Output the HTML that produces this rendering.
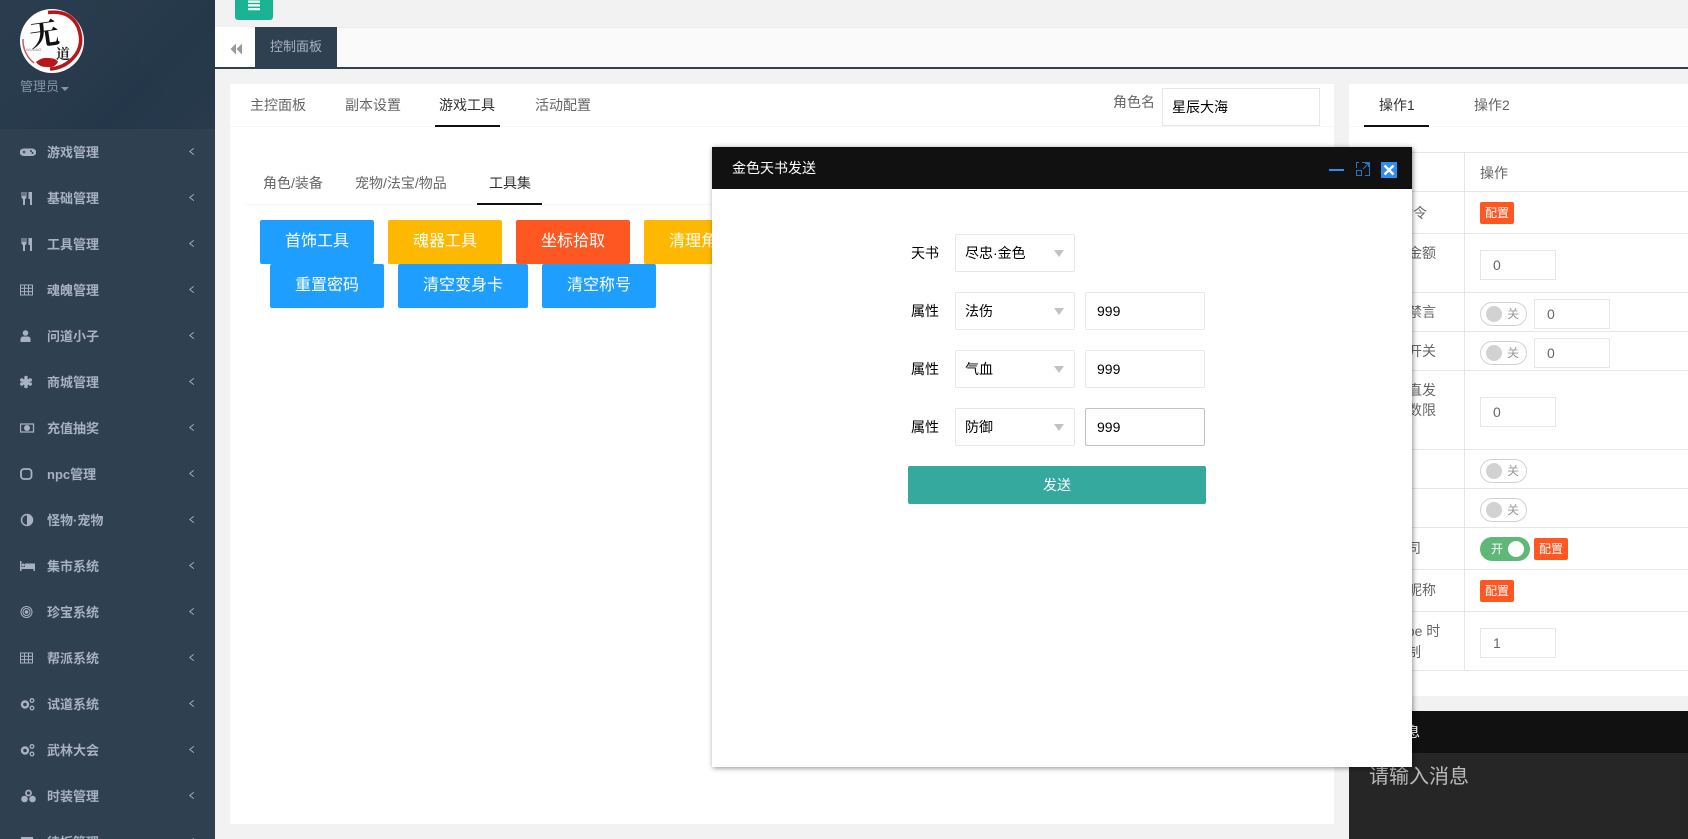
<!DOCTYPE html>
<html lang="zh">
<head>
<meta charset="utf-8">
<title>控制面板</title>
<style>
html,body{margin:0;padding:0;width:1688px;height:839px;overflow:hidden;background:#f2f2f2;}
body{position:relative;font-family:"Liberation Sans","WenQuanYi Zen Hei","Noto Sans CJK SC",sans-serif;font-size:14px;color:#666;}
.a{position:absolute;white-space:nowrap;box-sizing:border-box;}
.t{position:absolute;white-space:nowrap;height:20px;line-height:20px;}
#side{position:absolute;left:0;top:0;width:215px;height:839px;background:#2f4050;overflow:hidden;}
#shead{position:absolute;left:0;top:0;width:215px;height:129px;background:linear-gradient(135deg,#2a3d4f 0%,#283b4c 40%,#24374a 65%,#283a4c 100%);}
.mi{position:absolute;left:0;width:215px;height:46px;color:#a7b1c2;font-size:13px;font-weight:bold;line-height:47px;}
.mi span{position:absolute;left:47px;top:0;}
.mi svg.ic{position:absolute;left:20px;top:15px;width:16px;height:16px;fill:#a7b1c2;}
.mi svg.ch{position:absolute;left:188px;top:18px;width:7px;height:9px;fill:none;stroke:#a7b1c2;stroke-width:1;}
.btn{position:absolute;height:44px;line-height:44px;text-align:center;color:#fff;font-size:16px;border-radius:2px;background:#1E9FFF;}
.sel,.inp{position:absolute;height:38px;background:#fff;border:1px solid #e6e6e6;box-sizing:border-box;color:#000;line-height:37px;border-radius:2px;white-space:nowrap;}
.sel{left:955px;width:120px;padding-left:9px;}
.sel i{position:absolute;left:98px;top:15px;width:0;height:0;border:5px solid transparent;border-top:7px solid #c2c2c2;border-bottom:0;}
.inp{left:1085px;width:120px;padding-left:11px;}
.lab{position:absolute;left:911px;color:#000;height:20px;line-height:20px;white-space:nowrap;}
.hl{position:absolute;left:1349px;width:339px;height:1px;background:#e6e6e6;}
.ti{position:absolute;width:76px;height:30px;background:#fff;border:1px solid #e6e6e6;box-sizing:border-box;line-height:28px;padding-left:12px;color:#666;}
.bd{position:absolute;width:34px;height:22px;line-height:22px;background:#FF5722;color:#fff;font-size:12px;text-align:center;border-radius:2px;}
.sw{position:absolute;left:1480px;width:47px;height:24px;border:1px solid #d2d2d2;border-radius:20px;box-sizing:border-box;background:#fff;color:#999;font-size:12px;line-height:22px;}
.sw i{position:absolute;left:5px;top:3px;width:16px;height:16px;background:#d2d2d2;border-radius:50%;}
.sw b{position:absolute;left:26px;top:0;font-weight:normal;}
#modal{position:absolute;left:712px;top:147px;width:700px;height:620px;background:#fff;box-shadow:1px 1px 5px rgba(0,0,0,.45);z-index:10;}
</style>
</head>
<body>

<div id="side">
  <div id="shead"></div>
  <svg class="a" style="left:0;top:0;width:215px;height:129px" viewBox="0 0 215 129"><path d="M95 0 L190 129 L215 129 L215 0Z" fill="#293b4d" opacity=".25"/></svg>
  <svg class="a" style="left:20px;top:9px;width:64px;height:64px" viewBox="0 0 64 64">
    <circle cx="32" cy="32" r="32" fill="#fff"/>
    <path d="M28 3.500 Q50 1 58 18 Q66 38 50 52 Q42 59 30 60" fill="none" stroke="#b8161b" stroke-width="3.500"/>
    <path d="M3 30 A29 29 0 0 0 14 54" fill="none" stroke="#cf5a5a" stroke-width="1.500"/>
    <path d="M16 53 q6-5 12-4 q8 0 10 4 q-3 6-11 5 q-8 0-11-5z" fill="#b8161b"/>
    <g transform="rotate(-8 24 24)"><text x="9" y="36" font-size="30" fill="#111" font-family="'Noto Serif CJK SC',serif" font-weight="bold">无</text></g>
    <text x="36" y="50" font-size="14" font-weight="bold" fill="#222" font-family="'Noto Serif CJK SC',serif">道</text>
    <text x="6" y="42" font-size="4" fill="#777" font-family="'Liberation Sans',sans-serif">WUDAO</text>
  </svg>
  <div class="t" style="left:20px;top:77px;font-size:13px;color:#8095a8">管理员</div>
  <div class="a" style="left:61px;top:87px;border:4px solid transparent;border-top:4px solid #8095a8;border-bottom:0"></div>

  <div class="mi" style="top:129px"><svg class="ic" viewBox="0 0 16 16"><path d="M4 4.500h8a4 3.500 0 0 1 0 7.500h-8a4 3.500 0 0 1 0-7.500z" fill="#a7b1c2"/><path d="M2.500 8h3M4 6.500v3" stroke="#2f4050" stroke-width="1"/><circle cx="11" cy="7" r="1" fill="#2f4050"/><circle cx="12.500" cy="9" r="1" fill="#2f4050"/></svg><span>游戏管理</span><svg class="ch" viewBox="0 0 7 10"><path d="M6 1.500L1.500 5L6 8.500"/></svg></div>
  <div class="mi" style="top:175px"><svg class="ic" viewBox="0 0 16 16"><path d="M1 2v5q0 1.500 1.500 2v6h2V9q1.500-.5 1.500-2V2H5v4H4V2H3v4H2V2zM8 2h3.500v13h-2V9H8z" transform="translate(.5 0)"/></svg><span>基础管理</span><svg class="ch" viewBox="0 0 7 10"><path d="M6 1.500L1.500 5L6 8.500"/></svg></div>
  <div class="mi" style="top:221px"><svg class="ic" viewBox="0 0 16 16"><path d="M1 2v5q0 1.500 1.500 2v6h2V9q1.500-.5 1.500-2V2H5v4H4V2H3v4H2V2zM8 2h3.500v13h-2V9H8z" transform="translate(.5 0)"/></svg><span>工具管理</span><svg class="ch" viewBox="0 0 7 10"><path d="M6 1.500L1.500 5L6 8.500"/></svg></div>
  <div class="mi" style="top:267px"><svg class="ic" viewBox="0 0 16 16"><path d="M.5 3h12v10H.5zM4.500 3v10M8.500 3v10M.5 6.300h12M.5 9.600h12" fill="none" stroke="#a7b1c2"/></svg><span>魂魄管理</span><svg class="ch" viewBox="0 0 7 10"><path d="M6 1.500L1.500 5L6 8.500"/></svg></div>
  <div class="mi" style="top:313px"><svg class="ic" viewBox="0 0 16 16"><circle cx="5.500" cy="5" r="2.800"/><path d="M0.500 14V11.500Q.5 8.500 3 8.500H8Q10.500 8.500 10.500 11.500V14z"/></svg><span>问道小子</span><svg class="ch" viewBox="0 0 7 10"><path d="M6 1.500L1.500 5L6 8.500"/></svg></div>
  <div class="mi" style="top:359px"><svg class="ic" viewBox="0 0 16 16"><circle cx="6" cy="8" r="3.600"/><circle cx="6" cy="3.500" r="1.800"/><circle cx="6" cy="12.500" r="1.800"/><circle cx="1.800" cy="6" r="1.800"/><circle cx="10.200" cy="6" r="1.800"/><circle cx="1.800" cy="10" r="1.800"/><circle cx="10.200" cy="10" r="1.800"/></svg><span>商城管理</span><svg class="ch" viewBox="0 0 7 10"><path d="M6 1.500L1.500 5L6 8.500"/></svg></div>
  <div class="mi" style="top:405px"><svg class="ic" viewBox="0 0 16 16"><path d="M.5 4h13v8H.5z" fill="none" stroke="#a7b1c2" stroke-width="1.300"/><circle cx="7" cy="8" r="3"/></svg><span>充值抽奖</span><svg class="ch" viewBox="0 0 7 10"><path d="M6 1.500L1.500 5L6 8.500"/></svg></div>
  <div class="mi" style="top:451px"><svg class="ic" viewBox="0 0 16 16"><rect x="1" y="3" width="10.500" height="10" rx="3" fill="none" stroke="#a7b1c2" stroke-width="1.800"/></svg><span>npc管理</span><svg class="ch" viewBox="0 0 7 10"><path d="M6 1.500L1.500 5L6 8.500"/></svg></div>
  <div class="mi" style="top:497px"><svg class="ic" viewBox="0 0 16 16"><circle cx="7" cy="8" r="5.500" fill="none" stroke="#a7b1c2" stroke-width="1.500"/><path d="M7 2.500a5.500 5.500 0 0 1 0 11z"/></svg><span>怪物·宠物</span><svg class="ch" viewBox="0 0 7 10"><path d="M6 1.500L1.500 5L6 8.500"/></svg></div>
  <div class="mi" style="top:543px"><svg class="ic" viewBox="0 0 16 16"><path d="M0 3h1.500v6H15v4h-1.500v-2H1.500v2H0z"/><rect x="5" y="5.500" width="10" height="3.500"/><circle cx="3.300" cy="7" r="1.500"/></svg><span>集市系统</span><svg class="ch" viewBox="0 0 7 10"><path d="M6 1.500L1.500 5L6 8.500"/></svg></div>
  <div class="mi" style="top:589px"><svg class="ic" viewBox="0 0 16 16"><g fill="none" stroke="#a7b1c2"><circle cx="6.500" cy="8" r="5.500"/><circle cx="6.500" cy="8" r="3.500"/></g><circle cx="6.500" cy="8" r="1.800"/></svg><span>珍宝系统</span><svg class="ch" viewBox="0 0 7 10"><path d="M6 1.500L1.500 5L6 8.500"/></svg></div>
  <div class="mi" style="top:635px"><svg class="ic" viewBox="0 0 16 16"><path d="M.5 3h12v10H.5zM4.500 3v10M8.500 3v10M.5 6.300h12M.5 9.600h12" fill="none" stroke="#a7b1c2"/></svg><span>帮派系统</span><svg class="ch" viewBox="0 0 7 10"><path d="M6 1.500L1.500 5L6 8.500"/></svg></div>
  <div class="mi" style="top:681px"><svg class="ic" viewBox="0 0 16 16"><circle cx="5" cy="8.500" r="3" fill="none" stroke="#a7b1c2" stroke-width="2.400"/><circle cx="12" cy="4.500" r="1.800" fill="none" stroke="#a7b1c2" stroke-width="1.300"/><circle cx="12" cy="12" r="1.800" fill="none" stroke="#a7b1c2" stroke-width="1.300"/></svg><span>试道系统</span><svg class="ch" viewBox="0 0 7 10"><path d="M6 1.500L1.500 5L6 8.500"/></svg></div>
  <div class="mi" style="top:727px"><svg class="ic" viewBox="0 0 16 16"><circle cx="5" cy="8.500" r="3" fill="none" stroke="#a7b1c2" stroke-width="2.400"/><circle cx="12" cy="4.500" r="1.800" fill="none" stroke="#a7b1c2" stroke-width="1.300"/><circle cx="12" cy="12" r="1.800" fill="none" stroke="#a7b1c2" stroke-width="1.300"/></svg><span>武林大会</span><svg class="ch" viewBox="0 0 7 10"><path d="M6 1.500L1.500 5L6 8.500"/></svg></div>
  <div class="mi" style="top:773px"><svg class="ic" style="width:17px" viewBox="0 0 16 16"><g fill="none" stroke="#a7b1c2" stroke-width="1.800"><circle cx="8" cy="5" r="2.500"/></g><circle cx="4" cy="11" r="3.300"/><circle cx="12" cy="11" r="3.300"/></svg><span>时装管理</span><svg class="ch" viewBox="0 0 7 10"><path d="M6 1.500L1.500 5L6 8.500"/></svg></div>
  <div class="mi" style="top:819px"><svg class="ic" viewBox="0 0 16 16"><rect x="1" y="3" width="12" height="10"/></svg><span>待扳管理</span><svg class="ch" viewBox="0 0 7 10"><path d="M6 1.500L1.500 5L6 8.500"/></svg></div>
</div>

<!-- top bar -->
<div class="a" style="left:235px;top:-10px;width:38px;height:30px;background:#1ab394;border-radius:3px"></div>
<svg class="a" style="left:248px;top:0;width:12px;height:12px" viewBox="0 0 12 12"><path d="M0 0.500h12v2.200H0zM0 4.300h12v2.200H0zM0 8.100h12v2.200H0z" fill="#fff"/></svg>

<!-- tab row -->
<div class="a" style="left:215px;top:27px;width:1473px;height:40px;background:#fafafa;border-top:1px solid #ededed"></div>
<div class="a" style="left:215px;top:27px;width:40px;height:40px;background:#fff"></div>
<svg class="a" style="left:230px;top:43px;width:12px;height:12px" viewBox="0 0 12 12"><path d="M6 0.500V11.500L0.500 6zM12 0.500V11.500L6.500 6z" fill="#999"/></svg>
<div class="a" style="left:255px;top:27px;width:82px;height:41px;background:#2f4050;color:#a7b1c2;font-size:13px;line-height:40px;text-align:center">控制面板</div>
<div class="a" style="left:215px;top:67px;width:1473px;height:2px;background:#2f4050"></div>

<!-- left panel -->
<div class="a" style="left:230px;top:84px;width:1104px;height:740px;background:#fff"></div>
<div class="a" style="left:230px;top:126px;width:1104px;height:1px;background:#f6f6f6"></div>
<div class="t" style="left:250px;top:95px;color:#666">主控面板</div>
<div class="t" style="left:345px;top:95px;color:#666">副本设置</div>
<div class="t" style="left:439px;top:95px;color:#333">游戏工具</div>
<div class="t" style="left:535px;top:95px;color:#666">活动配置</div>
<div class="a" style="left:435px;top:125px;width:65px;height:2px;background:#111"></div>

<div class="t" style="left:1113px;top:92px;color:#666">角色名</div>
<div class="a" style="left:1162px;top:88px;width:158px;height:38px;border:1px solid #e6e6e6;line-height:36px;padding-left:9px;color:#000">星辰大海</div>

<div class="a" style="left:245px;top:204px;width:1089px;height:1px;background:#f6f6f6"></div>
<div class="t" style="left:263px;top:173px;color:#666">角色/装备</div>
<div class="t" style="left:355px;top:173px;color:#666">宠物/法宝/物品</div>
<div class="t" style="left:489px;top:173px;color:#333">工具集</div>
<div class="a" style="left:477px;top:203px;width:65px;height:2px;background:#111"></div>

<div class="btn" style="left:260px;top:220px;width:114px">首饰工具</div>
<div class="btn" style="left:388px;top:220px;width:114px;background:#FFB800">魂器工具</div>
<div class="btn" style="left:516px;top:220px;width:114px;background:#FF5722">坐标拾取</div>
<div class="btn" style="left:644px;top:220px;width:114px;background:#FFB800">清理角色</div>
<div class="btn" style="left:270px;top:264px;width:114px">重置密码</div>
<div class="btn" style="left:398px;top:264px;width:130px">清空变身卡</div>
<div class="btn" style="left:542px;top:264px;width:114px">清空称号</div>

<!-- right panel -->
<div class="a" style="left:1349px;top:84px;width:339px;height:612px;background:#fff"></div>
<div class="a" style="left:1349px;top:126px;width:339px;height:1px;background:#f6f6f6"></div>
<div class="t" style="left:1379px;top:95px;color:#333">操作1</div>
<div class="t" style="left:1474px;top:95px;color:#666">操作2</div>
<div class="a" style="left:1364px;top:125px;width:65px;height:2px;background:#111"></div>

<div class="hl" style="top:152px"></div><div class="hl" style="top:191px"></div><div class="hl" style="top:233px"></div><div class="hl" style="top:292px"></div><div class="hl" style="top:331px"></div><div class="hl" style="top:370px"></div><div class="hl" style="top:449px"></div><div class="hl" style="top:488px"></div><div class="hl" style="top:527px"></div><div class="hl" style="top:569px"></div><div class="hl" style="top:611px"></div><div class="hl" style="top:670px"></div>
<div class="a" style="left:1464px;top:152px;width:1px;height:518px;background:#e6e6e6"></div>

<div class="t" style="left:1480px;top:163px">操作</div>
<div class="t" style="left:1399px;top:203px">指令</div>
<div class="t" style="left:1394px;top:243px">礼金额</div>
<div class="t" style="left:1380px;top:302px">开启禁言</div>
<div class="t" style="left:1380px;top:341px">聊天开关</div>
<div class="t" style="left:1380px;top:380px">充值直发</div>
<div class="t" style="left:1394px;top:400px">次数限</div>
<div class="t" style="left:1393px;top:538px">公司</div>
<div class="t" style="left:1380px;top:580px">角色昵称</div>
<div class="t" style="left:1392px;top:621px">Type 时</div>
<div class="t" style="left:1393px;top:642px">限制</div>

<div class="bd" style="left:1480px;top:202px">配置</div>
<div class="ti" style="left:1480px;top:250px">0</div>
<div class="sw" style="top:302px"><i></i><b>关</b></div>
<div class="ti" style="left:1534px;top:299px">0</div>
<div class="sw" style="top:341px"><i></i><b>关</b></div>
<div class="ti" style="left:1534px;top:338px">0</div>
<div class="ti" style="left:1480px;top:397px">0</div>
<div class="sw" style="top:459px"><i></i><b>关</b></div>
<div class="sw" style="top:498px"><i></i><b>关</b></div>
<div class="a" style="left:1480px;top:537px;width:50px;height:24px;background:#5fb878;border-radius:20px;color:#fff;font-size:12px;line-height:24px;padding-left:11px">开<i style="position:absolute;left:28px;top:4px;width:16px;height:16px;background:#fff;border-radius:50%"></i></div>
<div class="bd" style="left:1534px;top:538px">配置</div>
<div class="bd" style="left:1480px;top:580px">配置</div>
<div class="ti" style="left:1480px;top:628px">1</div>

<!-- chat -->
<div class="a" style="left:1349px;top:711px;width:339px;height:42px;background:#111;color:#fff;line-height:42px;padding-left:43px">消息</div>
<div class="a" style="left:1349px;top:753px;width:339px;height:86px;background:#262626;color:#bbb;font-size:20px;line-height:30px;padding:9px 0 0 20px">请输入消息</div>

<!-- modal -->
<div id="modal">
  <div class="a" style="left:0;top:0;width:700px;height:42px;background:#111;color:#fff;line-height:42px;padding-left:20px">金色天书发送</div>
  <div class="a" style="left:617px;top:22px;width:15px;height:2px;background:#2e8ded"></div>
  <svg class="a" style="left:644px;top:15px;width:14px;height:14px" viewBox="0 0 14 14"><path d="M6 .5H13.500V13.500H9M.5 6V.5H3M.5 8.500H5.500V13.500H.5zM7 7L12.500 1.500M9 1.500H12.500V5" fill="none" stroke="#2e8ded" stroke-width="1" opacity=".8"/></svg>
  <div class="a" style="left:669px;top:15px;width:16px;height:16px;background:#2e8ded"></div>
  <svg class="a" style="left:669px;top:15px;width:16px;height:16px" viewBox="0 0 16 16"><path d="M3.500 3.500L12.500 12.500M12.500 3.500L3.500 12.500" stroke="#fff" stroke-width="2.400" fill="none"/></svg>
</div>
<div style="position:absolute;left:0;top:0;z-index:11">
  <div class="lab" style="top:243px">天书</div>
  <div class="sel" style="top:234px">尽忠·金色<i></i></div>
  <div class="lab" style="top:301px">属性</div>
  <div class="sel" style="top:292px">法伤<i></i></div>
  <div class="inp" style="top:292px">999</div>
  <div class="lab" style="top:359px">属性</div>
  <div class="sel" style="top:350px">气血<i></i></div>
  <div class="inp" style="top:350px">999</div>
  <div class="lab" style="top:417px">属性</div>
  <div class="sel" style="top:408px">防御<i></i></div>
  <div class="inp" style="top:408px;border-color:#c2c2c2">999</div>
  <div class="a" style="left:908px;top:466px;width:298px;height:38px;background:#35a99e;color:#fff;text-align:center;line-height:38px;border-radius:2px">发送</div>
</div>

</body>
</html>
